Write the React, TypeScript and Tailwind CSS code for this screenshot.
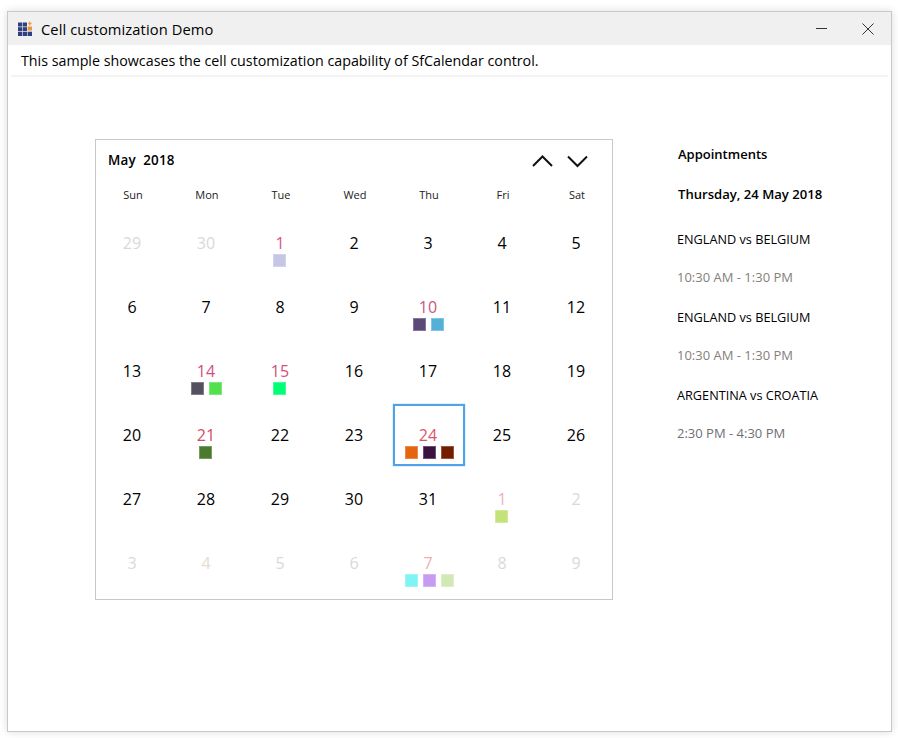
const font = "font-['Open_Sans','Noto_Sans',sans-serif]";

type Day = { n: number; c?: string; dots?: string[]; selected?: boolean };

const dim = "text-[#d9d9d9]";
const black = "text-black";

const days: Day[] = [
  { n: 29, c: dim },
  { n: 30, c: dim },
  { n: 1, c: "text-[#d0558a]", dots: ["#c5c5e6"] },
  { n: 2 },
  { n: 3 },
  { n: 4 },
  { n: 5 },
  { n: 6 },
  { n: 7 },
  { n: 8 },
  { n: 9 },
  { n: 10, c: "text-[#c9587f]", dots: ["#5b4a78", "#55b0d8"] },
  { n: 11 },
  { n: 12 },
  { n: 13 },
  { n: 14, c: "text-[#cf5080]", dots: ["#54505f", "#52e04e"] },
  { n: 15, c: "text-[#d4507c]", dots: ["#00ff74"] },
  { n: 16 },
  { n: 17 },
  { n: 18 },
  { n: 19 },
  { n: 20 },
  { n: 21, c: "text-[#d0505f]", dots: ["#4b7a2c"] },
  { n: 22 },
  { n: 23 },
  { n: 24, c: "text-[#d9566a]", dots: ["#e4640f", "#3b1340", "#741c00"], selected: true },
  { n: 25 },
  { n: 26 },
  { n: 27 },
  { n: 28 },
  { n: 29 },
  { n: 30 },
  { n: 31 },
  { n: 1, c: "text-[#efaec8]", dots: ["#c3e378"] },
  { n: 2, c: dim },
  { n: 3, c: dim },
  { n: 4, c: "text-[#e2dcd2]" },
  { n: 5, c: dim },
  { n: 6, c: dim },
  { n: 7, c: "text-[#f0aeb0]", dots: ["#7ef5f2", "#c79bf2", "#d3e9b5"] },
  { n: 8, c: dim },
  { n: 9, c: dim },
];

// the marker rows are not quite centred in the cell, it depends on how many there are
const dotOffset = ["-ml-[3px]", "-ml-[1px]", "ml-[1px]"];

const appointments = [
  { title: "ENGLAND vs BELGIUM", time: "10:30 AM - 1:30 PM", color: "text-[#86807a]" },
  { title: "ENGLAND vs BELGIUM", time: "10:30 AM - 1:30 PM", color: "text-[#86807a]" },
  { title: "ARGENTINA vs CROATIA", time: "2:30 PM - 4:30 PM", color: "text-[#6f6f78]" },
];

function AppIcon() {
  return (
    <svg width="14" height="15" viewBox="0 0 14 15" className="shrink-0">
      <rect x="0" y="1.500" width="4.200" height="4" fill="#2f3f7f" />
      <rect x="4.800" y="1.500" width="4.200" height="4" fill="#2f3f7f" />
      <rect x="9.600" y="5.500" width="4.400" height="4" fill="#e9973a" />
      <rect x="0" y="6.200" width="4.200" height="3.800" fill="#2f3f7f" />
      <rect x="4.800" y="6.200" width="4.200" height="3.800" fill="#2f3f7f" />
      <rect x="0" y="10.700" width="4.200" height="4.300" fill="#2f3f7f" />
      <rect x="4.800" y="10.700" width="4.200" height="4.300" fill="#2f3f7f" />
      <rect x="9.600" y="10.700" width="4.400" height="4.300" fill="#2f3f7f" />
      <path d="M11.800 0l1 1.700 1.200.800-1.200.800-1 1.700-1-1.700-1.200-.800 1.200-.800z" fill="#f0a040" />
    </svg>
  );
}

export default function App() {
  return (
    <div className={`${font} h-[738px] w-[898px] bg-white pl-[7px] pt-[11px] text-black`}>
      <div className="flex h-[721px] w-[885px] flex-col border border-[#c9c9c9] shadow-[0_0_8px_rgba(0,0,0,0.14)]">
        <div className="flex h-[33px] items-center bg-[#f0f0f0] pl-[10px]">
          <AppIcon />
          <span className="ml-[9px] pt-[2px] text-[14.7px] leading-none tracking-[0.1px]">Cell customization Demo</span>
          <div className="ml-auto flex items-center">
            <div className="mr-[35px] h-px w-[11px] bg-[#333]" />
            <svg width="12" height="12" viewBox="0 0 12 12" className="mr-[17px]">
              <path d="M0.500 0.500L11.500 11.500M11.500 0.500L0.500 11.500" stroke="#333" strokeWidth="1" fill="none" />
            </svg>
          </div>
        </div>

        <div className="mx-[3px] flex h-[32px] items-center border-b-2 border-[#f3f3f3] pl-[10px] pt-[1px] text-[14.27px]">
          This sample showcases the cell customization capability of SfCalendar control.
        </div>

        <div className="flex pl-[87px] pt-[62px]">
          <div className="h-[461px] w-[518px] border border-[#c8c8c8]">
            <div className="flex h-[39px] items-center pl-[12px] pt-[2px]">
              <span className="text-[13.4px] font-semibold tracking-[0.2px] whitespace-pre">May  2018</span>
              <svg width="56" height="14" viewBox="0 0 56 14" className="ml-auto mr-[24px]">
                <path d="M1 12L10.500 2.500L20 12" stroke="#111" strokeWidth="2" fill="none" />
                <path d="M36 2.500L45.500 12L55 2.500" stroke="#111" strokeWidth="2" fill="none" />
              </svg>
            </div>
            <div className="grid h-[32px] grid-cols-[repeat(7,74px)] items-center">
              {["Sun", "Mon", "Tue", "Wed", "Thu", "Fri", "Sat"].map((d) => (
                <div key={d} className="text-center text-[11px] text-[#222]">
                  {d}
                </div>
              ))}
            </div>
            <div className="grid grid-cols-[repeat(7,74px)]">
              {days.map((d, i) => (
                <div key={i} className="relative flex h-[64px] flex-col items-center pt-[22px]">
                  {d.selected && (
                    <div className="absolute bottom-[1px] left-[1px] top-[1px] w-[72px] border-2 border-[#4fa3e8] shadow-[0_0_1px_#4fa3e8]" />
                  )}
                  <div className={`h-[20px] pr-[2px] text-[16px] leading-[20px] ${d.c ?? black}`}>{d.n}</div>
                  {d.dots && (
                    <div className={`mt-[1px] flex gap-[5px] ${dotOffset[d.dots.length - 1]}`}>
                      {d.dots.map((color, j) => (
                        <div
                          key={j}
                          className="size-[13px] border border-white/25"
                          style={{ backgroundColor: color }}
                        />
                      ))}
                    </div>
                  )}
                </div>
              ))}
            </div>
          </div>

          <div className="ml-[64px] flex flex-col">
            <div className="ml-[1px] mt-[1px] flex h-[30px] items-center text-[13px] font-semibold">Appointments</div>
            <div className="ml-[1px] mt-[10px] flex h-[30px] items-center text-[13.1px] font-semibold">
              Thursday, 24 May 2018
            </div>
            <div className="mt-[19px] flex flex-col gap-[20px]">
              {appointments.map((a, i) => (
                <div key={i} className="flex flex-col gap-[18px]">
                  <div className="h-[20px] text-[12.7px] leading-[20px]">{a.title}</div>
                  <div className={`h-[20px] text-[13px] leading-[20px] ${a.color}`}>{a.time}</div>
                </div>
              ))}
            </div>
          </div>
        </div>
      </div>
    </div>
  );
}
